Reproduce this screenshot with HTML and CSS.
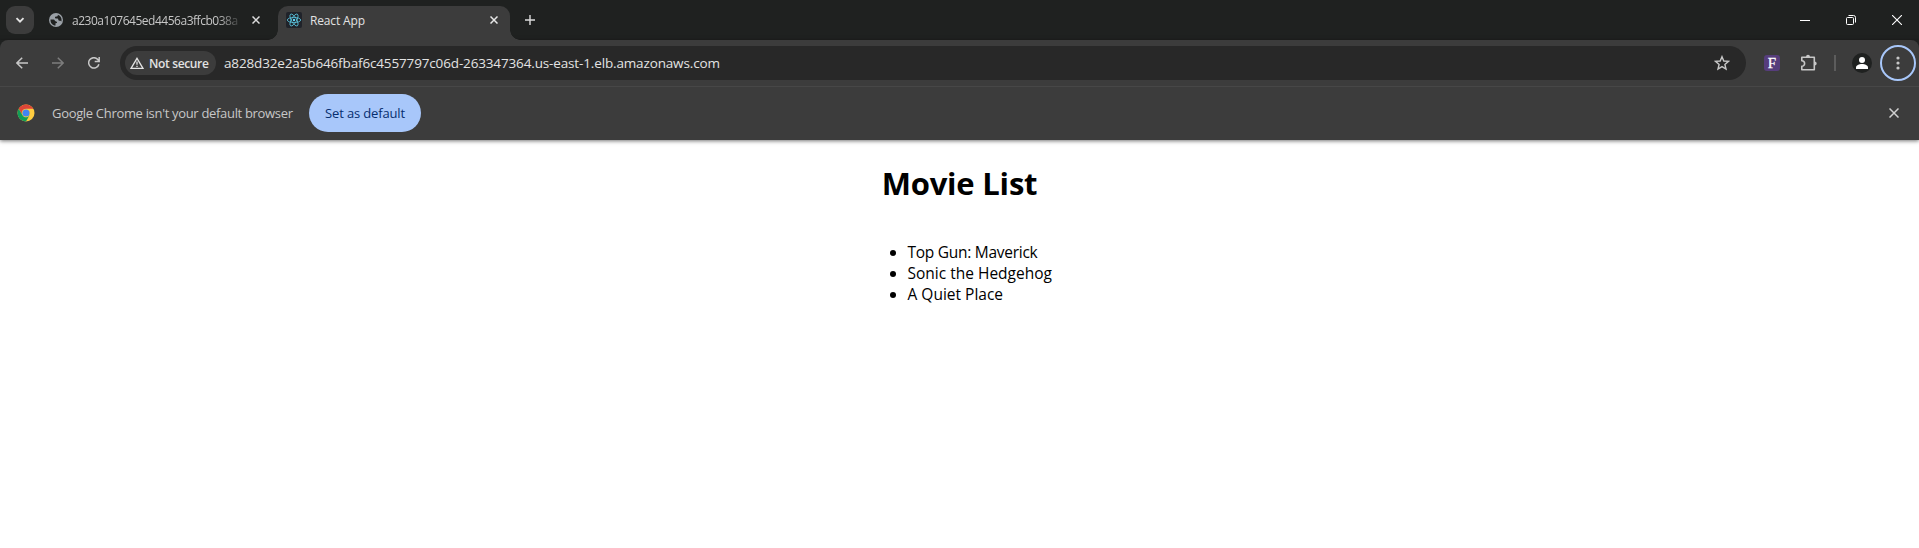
FILE: index.html
```html
<!DOCTYPE html>
<html lang="en">
<head>
<meta charset="utf-8">
<title>React App</title>
<link rel="stylesheet" href="styles.css">
</head>
<body>
<header class="tabstrip">
  <div class="tab-search"><svg width="10" height="10" viewBox="0 0 10 10"><path d="M1.5 3.2 5 6.7 8.500 3.200" fill="none" stroke="#e3e3e3" stroke-width="1.900"/></svg></div>
  <div class="tab idle">
    <svg class="globe" width="14" height="14" viewBox="0 0 14 14"><circle cx="7" cy="7" r="7" fill="#9aa0a6"/><path d="M1.500 6.500H4.500C6 6.500 5.500 8.300 7 8.500S8.500 10.500 6.500 10.300V12.600C3.500 12.500 1.300 10 1.500 6.500ZM8.800 1.700V2.600C8.800 4 6 3.200 6 4.600S7.500 5.500 8.500 5.500 9 7.800 10.500 7.800 12 8.500 12.400 8.500C13.200 5.500 11.500 2.500 8.800 1.700Z" fill="#1f2120"/></svg>
    <span class="tab-title faded">a230a107645ed4456a3ffcb038a</span>
    <svg class="x" width="8" height="8" viewBox="0 0 8 8"><path d="M.5.5l7 7M7.500.5l-7 7" stroke="#dcdcdc" stroke-width="1.500"/></svg>
  </div>
  <div class="tab active">
    <svg class="react" width="16" height="16" viewBox="0 0 16 16"><rect width="16" height="16" rx="2" fill="#20232a"/><g fill="none" stroke="#58bfd8" stroke-width=".85"><ellipse cx="8" cy="8" rx="6.700" ry="2.600"/><ellipse cx="8" cy="8" rx="6.700" ry="2.600" transform="rotate(60 8 8)"/><ellipse cx="8" cy="8" rx="6.700" ry="2.600" transform="rotate(120 8 8)"/></g><circle cx="8" cy="8" r="1.200" fill="#61dafb"/></svg>
    <span class="tab-title">React App</span>
    <svg class="x" width="8" height="8" viewBox="0 0 8 8"><path d="M.5.5l7 7M7.500.5l-7 7" stroke="#e8e8e8" stroke-width="1.500"/></svg>
  </div>
  <svg class="plus" width="10" height="10" viewBox="0 0 10 10"><path d="M5 0v10M0 5h10" stroke="#dcdcdc" stroke-width="1.400"/></svg>
  <div class="window-controls">
    <svg width="10" height="10" viewBox="0 0 10 10"><path d="M0 5.500h10" stroke="#fff"/></svg>
    <svg width="10" height="10" viewBox="0 0 10 10"><g fill="none" stroke="#fff"><rect x=".5" y="2.500" width="7" height="7" rx="1"/><path d="M2.500.5H7.500a2 2 0 0 1 2 2V7.500"/></g></svg>
    <svg width="10" height="10" viewBox="0 0 10 10"><path d="M0 0l10 10M10 0L0 10" stroke="#fff" stroke-width="1.100"/></svg>
  </div>
</header>
<div class="toolbar-wrap">
<nav class="toolbar">
  <div class="nav-buttons">
    <svg width="12" height="12" viewBox="0 0 12 12"><path d="M12 6H1M6.200.7.900 6l5.300 5.300" fill="none" stroke="#c7c7c7" stroke-width="1.500"/></svg>
    <svg width="12" height="12" viewBox="0 0 12 12"><path d="M0 6h11M5.800.7 11.100 6l-5.300 5.300" fill="none" stroke="#7d7d7d" stroke-width="1.500"/></svg>
    <svg width="12" height="12" viewBox="0 0 12 12"><path d="M10.900 7.200A5.200 5.200 0 1 1 10 2.700L11 4M11.200 0v4.500H6.700" fill="none" stroke="#c7c7c7" stroke-width="1.500"/></svg>
  </div>
  <div class="omnibox">
    <div class="chip"><svg width="14" height="12" viewBox="0 0 14 12"><path d="M7 1.300 13 11.300H1Z" fill="none" stroke="#e3e3e3" stroke-width="1.300"/><path d="M7 4.500v3.300M7 8.700V10" stroke="#e3e3e3" stroke-width="1.300"/></svg><span>Not secure</span></div>
    <span class="url">a828d32e2a5b646fbaf6c4557797c06d-263347364.us-east-1.elb.amazonaws.com</span>
    <svg class="star" width="16" height="16" viewBox="0 0 16 16"><path d="M8 1.700 9.800 6l4.700.4-3.600 3.100 1.100 4.600L8 11.600l-4 2.500 1.100-4.600L1.500 6.400 6.200 6Z" fill="none" stroke="#c7c7c7" stroke-width="1.400"/></svg>
  </div>
  <span class="ext">F</span>
  <svg class="puzzle" width="18" height="18" viewBox="0 0 18 18"><path d="M1.800 3.200H14.300V15.700H1.800V12.300A2.700 2.700 0 0 0 1.800 6.700Z" fill="none" stroke="#c7c7c7" stroke-width="1.600" stroke-linejoin="round"/><path d="M6 3a2 2.200 0 0 1 4 0ZM14.500 7.500a2.200 2 0 0 1 0 4Z" fill="#c7c7c7"/></svg>
  <span class="divider"></span>
  <svg class="avatar" width="20" height="20" viewBox="0 0 20 20"><circle cx="10" cy="10" r="10" fill="#1f2120"/><circle cx="10" cy="7" r="3" fill="#fff"/><path d="M4 16v-1.500C4 12.300 7 11 10 11s6 1.300 6 3.500V16Z" fill="#fff"/></svg>
  <span class="menu"><svg width="4" height="14" viewBox="0 0 4 14"><g fill="#c7c7c7"><circle cx="2" cy="2" r="1.600"/><circle cx="2" cy="7" r="1.600"/><circle cx="2" cy="12" r="1.600"/></g></svg></span>
</nav>
<section class="infobar">
  <svg width="18" height="18" viewBox="0 0 18 18"><circle cx="9" cy="9" r="8.500" fill="#ffcd40"/><path d="M1.640 4.750A8.500 8.500 0 0 1 16.360 4.750H9A4.250 4.250 0 0 0 5.320 11.120Z" fill="#de4537"/><path d="M1.640 4.750A8.500 8.500 0 0 0 9 17.500l3.680-6.380A4.250 4.250 0 0 1 5.320 11.120Z" fill="#109d58"/><circle cx="9" cy="9" r="3.600" fill="#4285f4"/></svg>
  <span class="message">Google Chrome isn't your default browser</span>
  <button class="default-button">Set as default</button>
  <svg class="dismiss" width="10" height="10" viewBox="0 0 10 10"><path d="M.5.5l9 9M9.500.5l-9 9" stroke="#d0d0d0" stroke-width="1.500"/></svg>
</section>
</div>
<main class="page">
  <h1>Movie List</h1>
  <ul>
    <li class="tight">Top Gun: Maverick</li>
    <li>Sonic the Hedgehog</li>
    <li>A Quiet Place</li>
  </ul>
</main>
</body>
</html>
```
FILE: styles.css
```css
* { box-sizing: border-box; }
body { margin: 0; height: 548px; overflow: hidden; background: #fff; font-family: "Open Sans", "Noto Sans", sans-serif; white-space: nowrap; }
svg { display: block; flex: none; }
.tabstrip { height: 40px; background: #1f2120; display: flex; align-items: center; padding-left: 6px; }
.tab-search { width: 28px; height: 28px; border-radius: 9px; background: #3c3c3c; display: grid; place-items: center; }
.tab { display: flex; align-items: center; color: #e3e3e3; font-size: 12px; }
.idle { width: 244px; padding-left: 15px; color: #c7c7c7; }
.tab-title { margin-left: 8px; line-height: 18px; letter-spacing: -.15px; padding-top: 1px; }
.faded { width: 168px; margin-left: 9px; letter-spacing: -.48px; -webkit-mask-image: linear-gradient(90deg, #000 145px, transparent 172px); mask-image: linear-gradient(90deg, #000 145px, transparent 172px); }
.idle .x { margin-left: 12px; }
.active { position: relative; width: 232px; height: 34px; align-self: flex-end; background: #3c3c3c; border-radius: 10px 10px 0 0; padding: 0 12px 6px 8px; }
.active .x { margin-left: auto; }
.active::before, .active::after { content: ""; position: absolute; bottom: 0; width: 10px; height: 10px; }
.active::before { left: -10px; background: radial-gradient(circle at 0 0, transparent 9.500px, #3c3c3c 10px); }
.active::after { right: -10px; background: radial-gradient(circle at 100% 0, transparent 9.500px, #3c3c3c 10px); }
.plus { margin-left: 15px; }
.window-controls { display: flex; gap: 36px; margin-left: auto; padding-right: 17px; }
.toolbar-wrap { background: #1f2120; box-shadow: 0 1px 4px rgba(0,0,0,.55); }
.toolbar { height: 47px; background: #3c3c3c; border-bottom: 1px solid #474747; border-radius: 8px 8px 0 0; display: flex; align-items: center; padding-left: 16px; }
.nav-buttons { display: flex; gap: 24px; width: 104px; }
.omnibox { width: 1626px; height: 34px; border-radius: 17px; background: #282828; display: flex; align-items: center; padding: 0 16px 0 5px; }
.chip { width: 91px; height: 24px; border-radius: 12px; background: #3c3c3c; display: flex; align-items: center; gap: 5px; padding-left: 5px; color: #e3e3e3; font-size: 12px; font-weight: 600; letter-spacing: -.35px; }
.url { margin-left: 8px; color: #e3e3e3; font-size: 13.500px; letter-spacing: -.145px; }
.star { margin-left: auto; }
.ext { width: 16px; height: 16px; margin-left: 18px; border-radius: 3px; background: #563d7c; color: #fff; font: 15px/16px "Liberation Serif", serif; text-align: center; -webkit-text-stroke: .3px #fff; }
.puzzle { margin-left: 20px; }
.divider { width: 2px; height: 16px; margin-left: 16px; background: #5c5c5c; }
.avatar { margin-left: 16px; }
.menu { width: 36px; height: 36px; margin-left: 8px; border: 2px solid #a8c7fa; border-radius: 50%; display: grid; place-items: center; }
.infobar { height: 53px; background: #3c3c3c; display: flex; align-items: center; padding: 0 20px 1px 17px; }
.message { margin-left: 17px; width: 257px; color: #c7c7c7; font-size: 13px; letter-spacing: -.32px; }
.default-button { width: 112px; height: 38px; padding: 0; border: 0; border-radius: 19px; background: #a8c7fa; color: #062e6f; font: 13px "Open Sans", sans-serif; letter-spacing: -.15px; }
.dismiss { margin-left: auto; }
.page { display: flex; flex-direction: column; align-items: center; color: #000; }
h1 { margin: 22px 0 0; font-size: 31px; line-height: 43px; font-weight: 700; letter-spacing: -.2px; }
ul { margin: 37px 0 0; padding-left: 40px; width: 184px; font-size: 15.500px; line-height: 21px; }
.tight { letter-spacing: -.27px; }
```
